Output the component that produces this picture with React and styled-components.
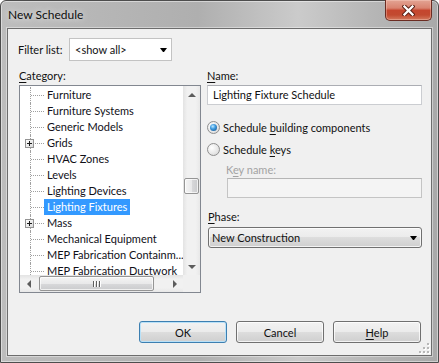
import styled, { createGlobalStyle, css } from "styled-components";

const GlobalStyle = createGlobalStyle`
  html, body {
    margin: 0;
    padding: 0;
    background: #ffffff;
  }
  body {
    font-family: "Segoe UI", Lato, "Liberation Sans", sans-serif;
    font-size: 11px;
    color: #111;
  }
  * {
    box-sizing: border-box;
  }
`;

const Window = styled.div`
  width: 439px;
  height: 363px;
  display: flex;
  flex-direction: column;
  padding: 0 6px 6px;
  border: 1px solid #4d4d4d;
  border-radius: 6px 6px 0 0;
  background: linear-gradient(
    to right,
    #bdbdbd 0%,
    #afafaf 45%,
    #cbcbcb 68%,
    #b5b5b5 86%,
    #a9a9a9 100%
  );
  box-shadow: inset 0 0 0 1px rgba(255, 255, 255, 0.45);
`;

const TitleBar = styled.div`
  height: 27px;
  display: flex;
  justify-content: space-between;
  align-items: flex-start;
`;

const Title = styled.span`
  padding: 6px 0 0 1px;
  font-size: 12px;
  line-height: 16px;
  color: #0e0e0e;
  text-shadow: 0 0 6px rgba(255, 255, 255, 0.9);
`;

const CloseButton = styled.div`
  width: 47px;
  height: 21px;
  margin-top: -1px;
  display: flex;
  align-items: center;
  justify-content: center;
  border: 1px solid #6b2c22;
  border-top: none;
  border-radius: 0 0 5px 5px;
  background: linear-gradient(
    #e3a494 0%,
    #d98370 40%,
    #c5462e 52%,
    #c24a30 75%,
    #d47a5e 100%
  );
  box-shadow: inset 0 0 0 1px rgba(255, 220, 210, 0.35);
`;

const Client = styled.div`
  flex: 1;
  position: relative;
  display: flex;
  flex-direction: column;
  padding: 9px 9px 12px 10px;
  background: #f0f0f0;
  border: 1px solid #6d6d6d;
  box-shadow: 0 0 0 1px rgba(255, 255, 255, 0.4);
`;

const FilterRow = styled.div`
  height: 23px;
  display: flex;
  align-items: center;
`;

const Label = styled.div`
  height: 16px;
  line-height: 16px;
  white-space: nowrap;
  width: ${(p) => (p.$width ? `${p.$width}px` : "auto")};
  margin-top: ${(p) => p.$top || 0}px;
  margin-left: ${(p) => p.$indent || 0}px;
  color: ${(p) => (p.$disabled ? "#a3a3a3" : "inherit")};
`;

const Key = styled.span`
  text-decoration: underline;
  text-underline-offset: 2px;
`;

const ComboBox = styled.div`
  width: 103px;
  height: 23px;
  display: flex;
  align-items: center;
  padding: 0 4px 0 5px;
  background: #ffffff;
  border: 1px solid #c3c3c3;
`;

const Arrow = styled.span`
  width: 1px;
  height: 0;
  border-left: 3px solid transparent;
  border-right: 3px solid transparent;
  border-top: 4px solid ${(p) => p.$color || "#000"};
  box-sizing: content-box;
  margin-left: auto;
`;

const Columns = styled.div`
  display: flex;
  gap: 6px;
  margin-top: 7px;
  padding-left: 1px;
`;

const LeftColumn = styled.div`
  width: 182px;
  display: flex;
  flex-direction: column;
`;

const RightColumn = styled.div`
  width: 215px;
  display: flex;
  flex-direction: column;
`;

const TreeView = styled.div`
  margin-top: 1px;
  width: 182px;
  height: 208px;
  border: 1px solid #828790;
  background: #ffffff;
  display: grid;
  grid-template-columns: 1fr 17px;
  grid-template-rows: 1fr 17px;
  overflow: hidden;
`;

const TreeBody = styled.div`
  overflow: hidden;
  padding-top: 1px;
`;

const TreeRow = styled.div`
  height: 16px;
  display: flex;
  align-items: center;
  white-space: nowrap;
`;

const Guide = styled.span`
  position: relative;
  width: 24px;
  height: 16px;
  flex: none;

  &::before {
    content: "";
    position: absolute;
    left: 10px;
    top: 0;
    bottom: 0;
    border-left: 1px dotted #a0a0a0;
  }
  &::after {
    content: "";
    position: absolute;
    left: 11px;
    width: 13px;
    top: 8px;
    border-top: 1px dotted #a0a0a0;
  }
`;

const Expander = styled.svg`
  position: absolute;
  left: 5px;
  top: 4px;
  z-index: 1;
`;

const ItemText = styled.span`
  height: 16px;
  line-height: 16px;
  padding: 0 3px;
  color: ${(p) => (p.$selected ? "#ffffff" : "#101018")};
  background: ${(p) => (p.$selected ? "#3399ff" : "transparent")};
`;

const ScrollBar = styled.div`
  display: flex;
  flex-direction: ${(p) => (p.$vertical ? "column" : "row")};
  background: ${(p) =>
    p.$vertical
      ? "linear-gradient(to right, #e3e3e3, #f1f1f1 25%, #f1f1f1 75%, #e8e8e8)"
      : "linear-gradient(#e3e3e3, #f1f1f1 25%, #f1f1f1 75%, #e8e8e8)"};
`;

const ArrowBox = styled.div`
  width: 17px;
  height: 17px;
  flex: none;
  display: flex;
  align-items: center;
  justify-content: center;
`;

const ScrollArrow = styled.span`
  width: 0;
  height: 0;
  ${(p) =>
    p.$dir === "up" &&
    css`
      border-left: 4px solid transparent;
      border-right: 4px solid transparent;
      border-bottom: 4px solid #5c5c5c;
    `}
  ${(p) =>
    p.$dir === "down" &&
    css`
      border-left: 4px solid transparent;
      border-right: 4px solid transparent;
      border-top: 4px solid #5c5c5c;
    `}
  ${(p) =>
    p.$dir === "left" &&
    css`
      border-top: 4px solid transparent;
      border-bottom: 4px solid transparent;
      border-right: 4px solid #5c5c5c;
    `}
  ${(p) =>
    p.$dir === "right" &&
    css`
      border-top: 4px solid transparent;
      border-bottom: 4px solid transparent;
      border-left: 4px solid #5c5c5c;
    `}
`;

const Track = styled.div`
  flex: 1;
  display: flex;
  flex-direction: ${(p) => (p.$vertical ? "column" : "row")};
`;

const Thumb = styled.div`
  flex: none;
  display: flex;
  align-items: center;
  justify-content: center;
  gap: 1px;
  border: 1px solid #959595;
  border-radius: 2px;
  box-shadow: inset 0 0 0 1px rgba(255, 255, 255, 0.7);
  ${(p) =>
    p.$vertical
      ? css`
          width: 15px;
          height: ${p.$size}px;
          margin: ${p.$offset}px 0 0 1px;
          background: linear-gradient(
            to right,
            #f4f4f4,
            #e9e9ea 50%,
            #d9d9db 50%,
            #cacbcd
          );
        `
      : css`
          height: 15px;
          width: ${p.$size}px;
          margin: 1px 0 0 ${p.$offset}px;
          background: linear-gradient(
            #f4f4f4,
            #e9e9ea 50%,
            #d9d9db 50%,
            #cacbcd
          );
        `}
`;

const GripLine = styled.span`
  width: 1px;
  height: 6px;
  background: #5f5f5f;
  box-shadow: 1px 0 0 #ffffff;
  margin-right: 1px;
`;

const Corner = styled.div`
  background: #f0f0f0;
`;

const TextBox = styled.div`
  height: 20px;
  line-height: 18px;
  padding-left: 5px;
  margin-top: ${(p) => p.$top || 0}px;
  margin-left: ${(p) => p.$indent || 0}px;
  background: ${(p) => (p.$disabled ? "#f4f4f4" : "#ffffff")};
  border: 1px solid ${(p) => (p.$disabled ? "#c4c4c4" : "#cbcdd1")};
  border-top-color: ${(p) => (p.$disabled ? "#b5b5b5" : "#abadb3")};
`;

const RadioRow = styled.div`
  height: 16px;
  display: flex;
  align-items: center;
  gap: 3px;
  margin-top: ${(p) => p.$top}px;
`;

const Radio = styled.span`
  width: 13px;
  height: 13px;
  flex: none;
  display: flex;
  align-items: center;
  justify-content: center;
  border-radius: 50%;
  border: 1px solid #8f8f8f;
  background: radial-gradient(circle at 35% 35%, #ffffff 0%, #e8e8e8 55%, #cfcfcf 100%);
`;

const RadioDot = styled.span`
  width: 7px;
  height: 7px;
  border-radius: 50%;
  background: radial-gradient(
    circle at 40% 35%,
    #bfeaff 0%,
    #3e9be0 40%,
    #124a82 100%
  );
`;

const DropButton = styled.div`
  height: 21px;
  margin: 2px 0 0 1px;
  display: flex;
  align-items: center;
  padding: 0 4px 0 3px;
  border: 1px solid #707070;
  border-radius: 3px;
  background: linear-gradient(#f2f2f2 0%, #ebebeb 50%, #dddddd 50%, #cfcfcf 100%);
  box-shadow: inset 0 0 0 1px rgba(255, 255, 255, 0.75);
`;

const ButtonRow = styled.div`
  margin-top: auto;
  display: flex;
  justify-content: flex-end;
  gap: 9px;
  padding-right: 1px;
`;

const PushButton = styled.div`
  width: 88px;
  height: 22px;
  display: flex;
  align-items: center;
  justify-content: center;
  border-radius: 3px;
  border: 1px solid ${(p) => (p.$default ? "#3c7fb1" : "#707070")};
  background: linear-gradient(#f2f2f2 0%, #ebebeb 50%, #dddddd 50%, #cfcfcf 100%);
  box-shadow: inset 0 0 0 1px
    ${(p) => (p.$default ? "#b9e1f8" : "rgba(255, 255, 255, 0.75)")};
`;

const SizeGrip = styled.svg`
  position: absolute;
  right: 1px;
  bottom: 1px;
`;

const categories = [
  { name: "Furniture" },
  { name: "Furniture Systems" },
  { name: "Generic Models" },
  { name: "Grids", expandable: true },
  { name: "HVAC Zones" },
  { name: "Levels" },
  { name: "Lighting Devices" },
  { name: "Lighting Fixtures", selected: true },
  { name: "Mass", expandable: true },
  { name: "Mechanical Equipment" },
  { name: "MEP Fabrication Containm..." },
  { name: "MEP Fabrication Ductwork" },
];

const PlusBox = () => (
  <Expander width="9" height="9" viewBox="0 0 9 9">
    <defs>
      <linearGradient id="pb" x1="0" y1="0" x2="1" y2="1">
        <stop offset="0" stopColor="#ffffff" />
        <stop offset="1" stopColor="#d9d9d9" />
      </linearGradient>
    </defs>
    <rect x="0.5" y="0.5" width="8" height="8" fill="url(#pb)" stroke="#939393" />
    <path d="M2 4.5h5M4.5 2v5" stroke="#1a1a1a" />
  </Expander>
);

const CloseGlyph = () => (
  <svg width="13" height="11" viewBox="0 0 13 11">
    <path
      d="M2.5 1.5 L10.5 9.5 M10.5 1.5 L2.5 9.5"
      stroke="#5a1f14"
      strokeWidth="4.2"
      strokeLinecap="square"
    />
    <path
      d="M2.5 1.5 L10.5 9.5 M10.5 1.5 L2.5 9.5"
      stroke="#ffffff"
      strokeWidth="2.3"
      strokeLinecap="square"
    />
  </svg>
);

export default function App() {
  return (
    <>
      <GlobalStyle />
      <Window>
        <TitleBar>
          <Title>New Schedule</Title>
          <CloseButton>
            <CloseGlyph />
          </CloseButton>
        </TitleBar>
        <Client>
          <FilterRow>
            <Label $width={51}>Filter list:</Label>
            <ComboBox>
              &lt;show all&gt;
              <Arrow />
            </ComboBox>
          </FilterRow>

          <Columns>
            <LeftColumn>
              <Label>
                <Key>C</Key>ategory:
              </Label>
              <TreeView>
                <TreeBody>
                  {categories.map((c) => (
                    <TreeRow key={c.name}>
                      <Guide>{c.expandable && <PlusBox />}</Guide>
                      <ItemText $selected={c.selected}>{c.name}</ItemText>
                    </TreeRow>
                  ))}
                </TreeBody>
                <ScrollBar $vertical>
                  <ArrowBox>
                    <ScrollArrow $dir="up" />
                  </ArrowBox>
                  <Track $vertical>
                    <Thumb $vertical $offset={75} $size={16} />
                  </Track>
                  <ArrowBox>
                    <ScrollArrow $dir="down" />
                  </ArrowBox>
                </ScrollBar>
                <ScrollBar>
                  <ArrowBox>
                    <ScrollArrow $dir="left" />
                  </ArrowBox>
                  <Track>
                    <Thumb $offset={2} $size={115}>
                      <GripLine />
                      <GripLine />
                      <GripLine />
                    </Thumb>
                  </Track>
                  <ArrowBox>
                    <ScrollArrow $dir="right" />
                  </ArrowBox>
                </ScrollBar>
                <Corner />
              </TreeView>
            </LeftColumn>

            <RightColumn>
              <Label>
                <Key>N</Key>ame:
              </Label>
              <TextBox $top={1}>Lighting Fixture Schedule</TextBox>

              <RadioRow $top={14}>
                <Radio>
                  <RadioDot />
                </Radio>
                <span>
                  Schedule <Key>b</Key>uilding components
                </span>
              </RadioRow>
              <RadioRow $top={6}>
                <Radio />
                <span>
                  Schedule <Key>k</Key>eys
                </span>
              </RadioRow>

              <Label $top={5} $indent={19} $disabled>
                K<Key>e</Key>y name:
              </Label>
              <TextBox $indent={20} $disabled />

              <Label $top={11} $indent={1}>
                <Key>P</Key>hase:
              </Label>
              <DropButton>
                New Construction
                <Arrow />
              </DropButton>
            </RightColumn>
          </Columns>

          <ButtonRow>
            <PushButton $default>OK</PushButton>
            <PushButton>Cancel</PushButton>
            <PushButton>
              <span>
                <Key>H</Key>elp
              </span>
            </PushButton>
          </ButtonRow>

          <SizeGrip width="12" height="12" viewBox="0 0 12 12">
            {[
              [9, 1],
              [9, 5],
              [5, 5],
              [9, 9],
              [5, 9],
              [1, 9],
            ].map(([x, y]) => (
              <g key={`${x}-${y}`}>
                <rect x={x + 1} y={y + 1} width="2" height="2" fill="#ffffff" />
                <rect x={x} y={y} width="2" height="2" fill="#b8b8b8" />
              </g>
            ))}
          </SizeGrip>
        </Client>
      </Window>
    </>
  );
}
